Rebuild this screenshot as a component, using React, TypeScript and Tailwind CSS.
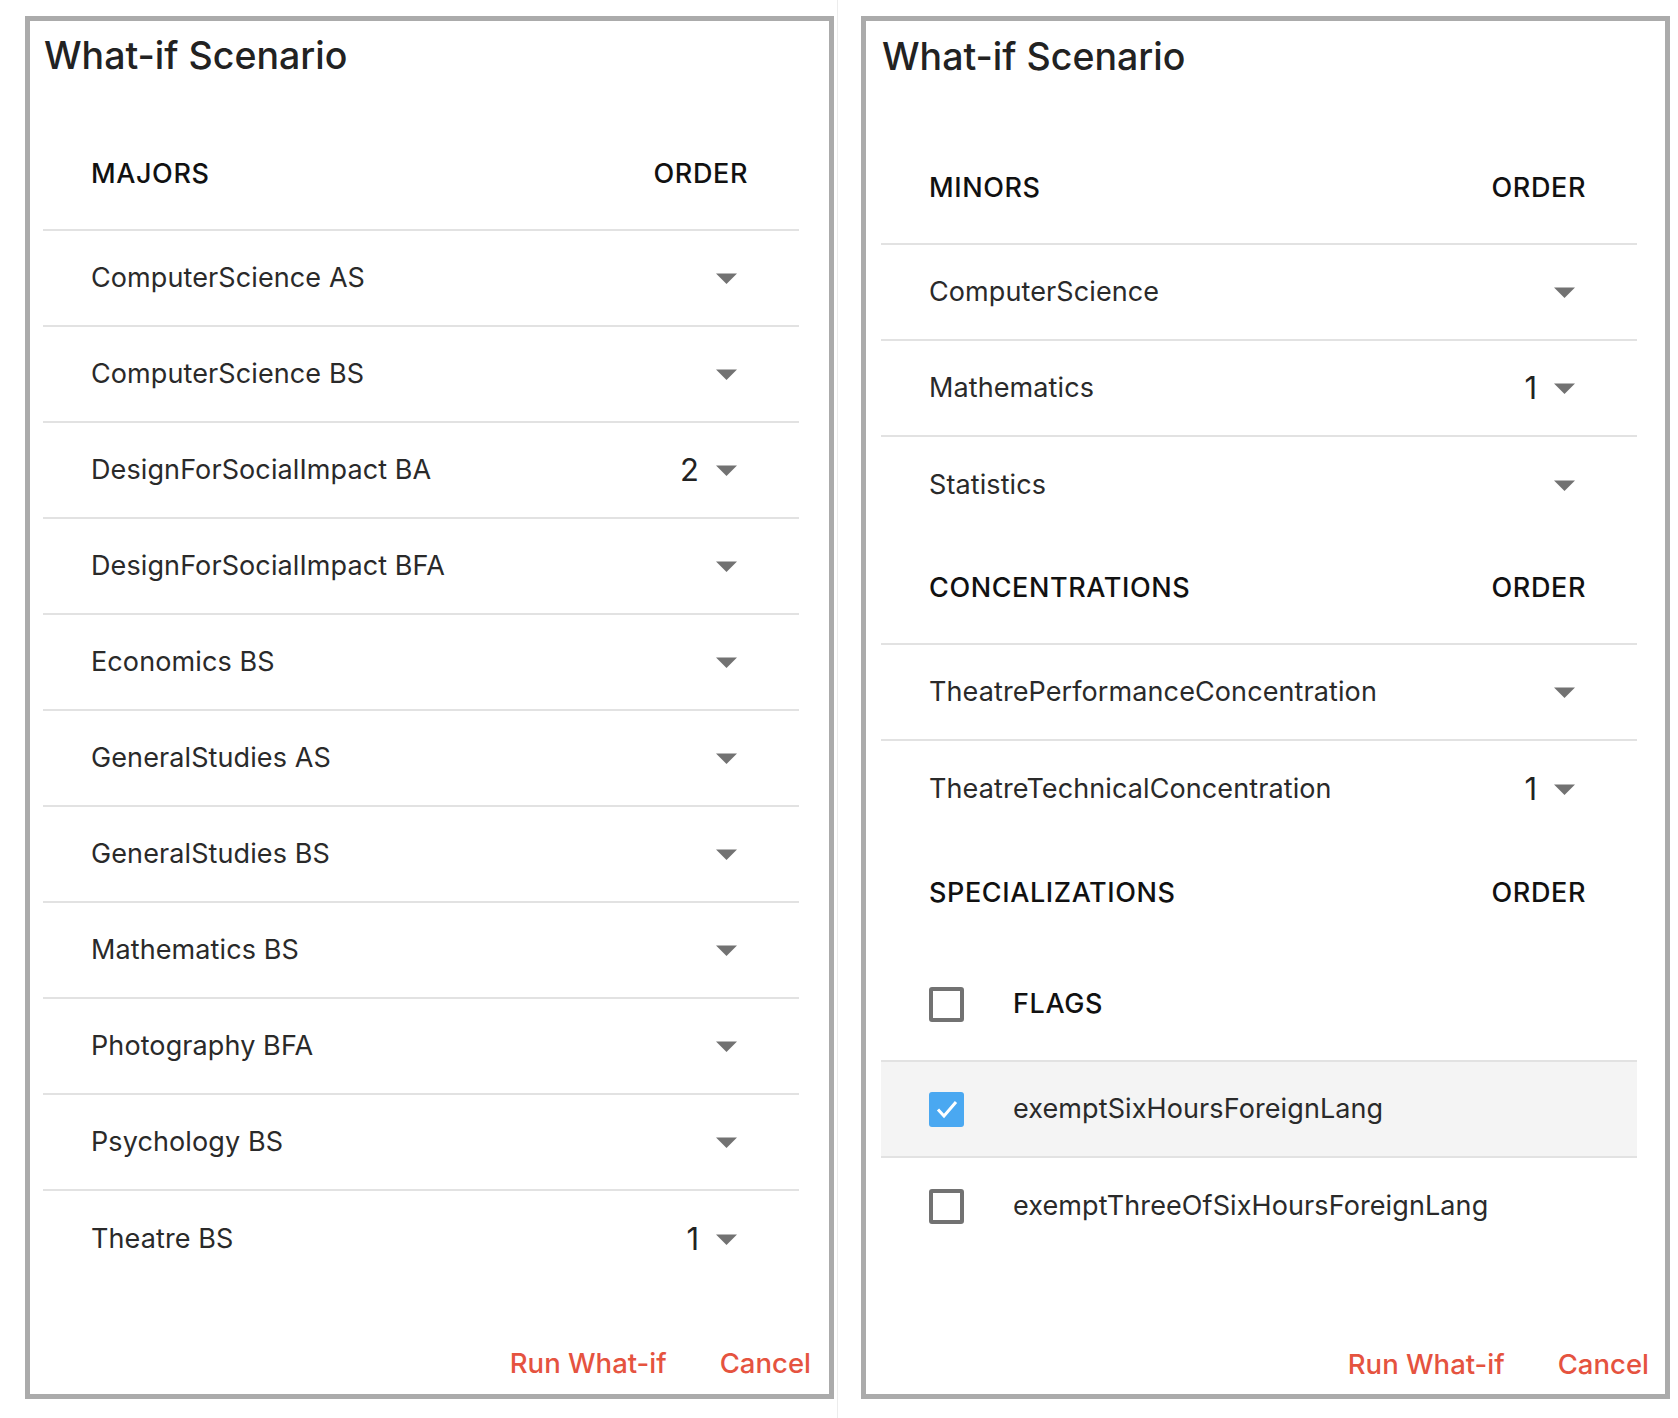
import clsx from "clsx";

type Item = { name: string; order?: string };

const majors: Item[] = [
  { name: "ComputerScience AS" },
  { name: "ComputerScience BS" },
  { name: "DesignForSocialImpact BA", order: "2" },
  { name: "DesignForSocialImpact BFA" },
  { name: "Economics BS" },
  { name: "GeneralStudies AS" },
  { name: "GeneralStudies BS" },
  { name: "Mathematics BS" },
  { name: "Photography BFA" },
  { name: "Psychology BS" },
  { name: "Theatre BS", order: "1" },
];

const minors: Item[] = [
  { name: "ComputerScience" },
  { name: "Mathematics", order: "1" },
  { name: "Statistics" },
];

const concentrations: Item[] = [
  { name: "TheatrePerformanceConcentration" },
  { name: "TheatreTechnicalConcentration", order: "1" },
];

function Arrow() {
  return (
    <svg width="21" height="11" viewBox="0 0 21 11" className="shrink-0">
      <path d="M0 0.5h21L10.5 11z" fill="#727272" />
    </svg>
  );
}

function Checkbox({ checked }: { checked?: boolean }) {
  if (checked) {
    return (
      <div className="flex h-[35px] w-[35px] shrink-0 items-center justify-center rounded-[3px] bg-[#4aa8f1]">
        <svg width="24" height="20" viewBox="0 0 24 20">
          <path d="M3 10.5l6 6.5L21 3" fill="none" stroke="white" strokeWidth="3" />
        </svg>
      </div>
    );
  }
  return <div className="h-[35px] w-[35px] shrink-0 rounded-[3px] border-[4px] border-[#727272]" />;
}

function Header({ label, border }: { label: string; border?: boolean }) {
  return (
    <div
      className={clsx(
        "flex h-[112px] items-center justify-between pl-[48px] pr-[51px] text-[27px] font-medium tracking-[0.6px] text-[#111]",
        border && "border-b-2 border-[#e2e2e2]"
      )}
    >
      <span>{label}</span>
      <span>ORDER</span>
    </div>
  );
}

function Row({ item, last }: { item: Item; last?: boolean }) {
  return (
    <div
      className={clsx(
        "flex h-[96px] items-center pl-[48px] pr-[62px]",
        !last && "border-b-2 border-[#e2e2e2]"
      )}
    >
      <span className="flex-1 text-[27px] tracking-[0.1px] text-[#2a2a2a]">{item.name}</span>
      {item.order ? <span className="mr-[17px] text-[31px] text-[#222]">{item.order}</span> : null}
      <Arrow />
    </div>
  );
}

function Section({ label, items }: { label: string; items: Item[] }) {
  return (
    <div>
      <Header label={label} border={items.length > 0} />
      {items.map((item, i) => (
        <Row key={item.name} item={item} last={i === items.length - 1} />
      ))}
    </div>
  );
}

function Footer({ pad }: { pad: string }) {
  return (
    <div className={clsx("mt-auto flex justify-end gap-[53px] text-[27.5px] font-medium leading-[40px] text-[#e5533f]", pad)}>
      <button type="button">Run What-if</button>
      <button type="button">Cancel</button>
    </div>
  );
}

export default function App() {
  return (
    <div className="flex h-[1418px] w-[1678px] bg-white font-['Inter',sans-serif]">
      <div className="ml-[25px] mt-[16px] flex h-[1383px] w-[809px] flex-col border-[5px] border-[#ababab]">
        <h1 className="h-[98px] pl-[14px] pt-[11px] text-[37.5px] font-medium leading-[48px] text-[#222]">What-if Scenario</h1>
        <div className="pl-[13px] pr-[30px]">
          <Section label="MAJORS" items={majors} />
        </div>
        <Footer pad="pb-[11px] pr-[18px]" />
      </div>

      <div className="ml-[3px] w-px bg-[#ececec]" />

      <div className="ml-[23px] mt-[16px] flex h-[1383px] w-[809px] flex-col border-[5px] border-[#ababab]">
        <h1 className="h-[112px] pl-[16px] pt-[12px] text-[37.5px] font-medium leading-[48px] text-[#222]">What-if Scenario</h1>
        <div className="pl-[15px] pr-[28px]">
          <Section label="MINORS" items={minors} />
          <Section label="CONCENTRATIONS" items={concentrations} />
          <Section label="SPECIALIZATIONS" items={[]} />
          <div className="flex h-[113px] items-center border-b-2 border-[#e2e2e2] pl-[48px] text-[27px] font-medium tracking-[0.6px] text-[#111]">
            <Checkbox />
            <span className="ml-[49px]">FLAGS</span>
          </div>
          <div className="flex h-[96px] items-center border-b-2 border-[#e2e2e2] bg-[#f4f4f4] pl-[48px]">
            <Checkbox checked />
            <span className="ml-[49px] text-[27px] tracking-[0.1px] text-[#2a2a2a]">exemptSixHoursForeignLang</span>
          </div>
          <div className="flex h-[96px] items-center pl-[48px]">
            <Checkbox />
            <span className="ml-[49px] text-[27px] tracking-[0.1px] text-[#2a2a2a]">exemptThreeOfSixHoursForeignLang</span>
          </div>
        </div>
        <Footer pad="pb-[10px] pr-[16px]" />
      </div>
    </div>
  );
}
